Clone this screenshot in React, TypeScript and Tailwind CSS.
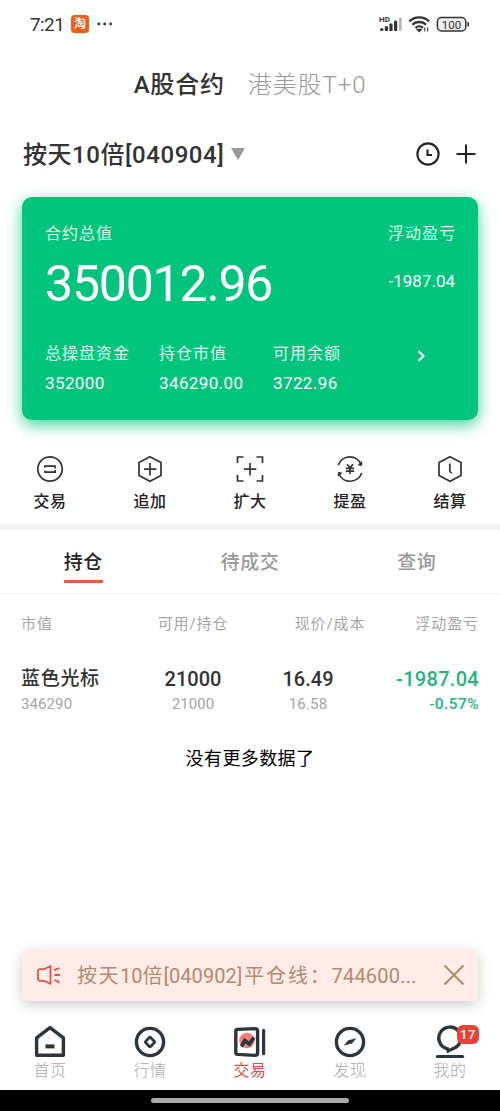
import React from "react";

type IconProps = { children: React.ReactNode };

function ActionIcon({ children }: IconProps) {
  return (
    <svg width="28" height="28" viewBox="0 0 28 28" fill="none" stroke="#333" strokeWidth="1.7">
      {children}
    </svg>
  );
}

function NavIcon({ children }: IconProps) {
  return (
    <svg width="36" height="36" viewBox="0 0 36 36" fill="none" stroke="#2b363d" strokeWidth="3.4">
      {children}
    </svg>
  );
}

const actions = [
  {
    label: "交易",
    icon: (
      <ActionIcon>
        <circle cx="14" cy="14" r="12.2" />
        <path d="M8.8 12.4V11.2H19v2.2M19.2 15v2.1H9v-1.6" />
      </ActionIcon>
    ),
  },
  {
    label: "追加",
    icon: (
      <ActionIcon>
        <path d="M14 1.8l11 5.8v12.8l-11 5.8-11-5.8V7.6z" />
        <path d="M14 8v12.4M8 14.2h12.4" />
      </ActionIcon>
    ),
  },
  {
    label: "扩大",
    icon: (
      <ActionIcon>
        <path d="M1.5 8V2h6M20.5 2h6v6M26.5 20v6h-6M7.5 26h-6v-6" />
        <path d="M14 8v12.4M8 14.2h12.4" />
      </ActionIcon>
    ),
  },
  {
    label: "提盈",
    icon: (
      <ActionIcon>
        <path d="M2.3 10A12.2 12.2 0 0 1 25.2 9.600M25.700 18A12.2 12.2 0 0 1 2.800 18.500" />
        <path d="M22.400 9.800l3.200.6.2-3.600zM5.600 18l-3.200-.6-.2 3.600z" fill="#333" strokeWidth="1" />
        <path d="M11 9.200l3 3.600 3-3.600M9.800 13.400h8.400M9.800 16.200h8.400M14 12.800v6.200" />
      </ActionIcon>
    ),
  },
  {
    label: "结算",
    icon: (
      <ActionIcon>
        <path d="M14 1.8l11 5.8v12.8l-11 5.8-11-5.8V7.6z" />
        <path d="M13.8 8.4v6.8c0 1.2.7 2.4 1.9 3" />
      </ActionIcon>
    ),
  },
];

const navs = [
  {
    label: "首页",
    icon: (
      <NavIcon>
        <path d="M4.600 13.800L18 3.600l13.400 10.200v17.400H4.600z" strokeLinejoin="round" />
        <path d="M13.500 22.400h9" strokeWidth="4" />
      </NavIcon>
    ),
  },
  {
    label: "行情",
    icon: (
      <NavIcon>
        <circle cx="18" cy="18" r="13.6" />
        <rect x="14.4" y="14.4" width="7.2" height="7.2" rx="1.2" transform="rotate(45 18 18)" strokeWidth="2.8" />
      </NavIcon>
    ),
  },
  {
    label: "交易",
    active: true,
    icon: (
      <NavIcon>
        <path d="M5.500 5.400L23 4.600q2.600 0 2.600 2.400v22q0 2.400-2.600 2.400L5.500 30.400q-1.700-.2-1.700-1.800V7.200q0-1.600 1.700-1.800z" strokeWidth="3.4" />
        <circle cx="15" cy="16.500" r="7.800" fill="#f77f7b" stroke="none" />
        <path d="M9.400 22.500l3.400-6 4.600 3.600 4.400-6.600" strokeWidth="3.6" />
        <path d="M31.600 6.300v23.400" strokeWidth="3.2" strokeLinecap="round" />
      </NavIcon>
    ),
  },
  {
    label: "发现",
    icon: (
      <NavIcon>
        <circle cx="18" cy="18" r="13.6" />
        <path d="M11.800 21.600l4.400-5.400 8.200-2-4.400 5.400z" fill="#2b363d" stroke="none" />
      </NavIcon>
    ),
  },
  {
    label: "我的",
    badge: "17",
    icon: (
      <NavIcon>
        <path d="M15.400 24.800A11 11 0 1 1 21 24.600l-4.800 2.400z" />
        <path d="M5.300 32.600h25.400" strokeWidth="3" strokeLinecap="round" />
      </NavIcon>
    ),
  },
];

function StatusBar() {
  return (
    <div className="flex h-12 items-center pl-[30px] pr-[30px] text-[#333]">
      <span className="w-[41px] text-[19px] leading-none tracking-[-0.6px]">7:21</span>
      <span className="flex h-[18px] w-[18px] items-center justify-center rounded-[4px] bg-[#f25c13] text-[12px] font-bold leading-none text-white">
        淘
      </span>
      <svg className="ml-2" width="16" height="4" viewBox="0 0 16 4" fill="#333">
        <circle cx="1.8" cy="2" r="1.4" />
        <circle cx="7.7" cy="2" r="1.4" />
        <circle cx="13.6" cy="2" r="1.4" />
      </svg>
      <svg className="ml-auto" width="91" height="20" viewBox="0 0 91 20" fill="#333">
        <text x="0" y="8" fontSize="8" fontWeight="700" textLength="11">HD</text>
        <rect x="1.2" y="14.2" width="3.2" height="2.8" rx="0.8" />
        <rect x="5.8" y="12.2" width="3.2" height="4.8" rx="0.8" />
        <rect x="10.4" y="9.6" width="3.2" height="7.4" rx="0.8" />
        <rect x="15" y="6.8" width="3.2" height="10.2" rx="0.8" />
        <rect x="19.8" y="3.6" width="3" height="13.4" rx="0.8" fill="#bbb" />
        <g fill="none" stroke="#333" strokeWidth="2.3">
          <path d="M30.3 7.400a14 14 0 0 1 19.800 0" />
          <path d="M33.400 10.800a9.600 9.600 0 0 1 13.600 0" />
          <path d="M36.500 13.800a5.400 5.400 0 0 1 7.400 0" />
        </g>
        <path d="M38 15.400h4.400l-2.200 2.400zM45.800 13.600v4M48.600 17.600v-4" stroke="#333" strokeWidth="1.1" />
        <rect x="58.4" y="3.600" width="28.400" height="13.400" rx="4" fill="#eee" stroke="#333" strokeWidth="1.5" />
        <rect x="88.400" y="8" width="1.600" height="4.600" rx="0.8" />
        <text x="62.800" y="14.500" fontSize="11.500" textLength="19.500">100</text>
      </svg>
    </div>
  );
}

function Stat({ label, value }: { label: string; value: string }) {
  return (
    <div className="w-[114px] shrink-0 whitespace-nowrap">
      <div className="text-[16px] leading-5 tracking-[1px] text-white/85">{label}</div>
      <div className="mt-[9px] text-[17px] leading-5 tracking-[0.4px]">{value}</div>
    </div>
  );
}

function SummaryCard() {
  return (
    <div className="mx-[22px] mt-[9px] h-[223px] rounded-[10px] bg-[#02c47c] px-[23px] pt-[27px] text-white shadow-[0_5px_16px_rgba(2,196,124,0.75)]">
      <div className="flex justify-between text-[16px] leading-5 tracking-[1px] text-white/85">
        <span>合约总值</span>
        <span className="-mr-px">浮动盈亏</span>
      </div>
      <div className="mt-[9px] flex h-[58px] justify-between">
        <span className="text-[50px] leading-[62px] tracking-[-1.2px]">350012.96</span>
        <span className="pt-[18px] text-[17px] leading-5">-1987.04</span>
      </div>
      <div className="mt-[33px] flex">
        <Stat label="总操盘资金" value="352000" />
        <Stat label="持仓市值" value="346290.00" />
        <Stat label="可用余额" value="3722.96" />
        <svg className="ml-7 mt-1" width="12" height="16" viewBox="0 0 12 16" fill="none" stroke="white" strokeWidth="2">
          <path d="M3.5 3l5 5-5 5" />
        </svg>
      </div>
    </div>
  );
}

function Holdings() {
  return (
    <div className="px-[21px]">
      <div className="mt-5 flex h-5 whitespace-nowrap text-[15px] leading-5 tracking-[0.9px] text-[#a5a5a5]">
        <span className="w-[103px]">市值</span>
        <span className="w-[138px] text-center">可用/持仓</span>
        <span className="w-[136px] text-center">现价/成本</span>
        <span className="flex-1 text-right">浮动盈亏</span>
      </div>
      <div className="mt-[30px] flex whitespace-nowrap">
        <div className="w-[103px]">
          <div className="pt-px text-[19px] font-medium leading-7 tracking-[0.7px] text-[#333]">蓝色光标</div>
          <div className="text-[15px] leading-[23px] tracking-[0.1px] text-[#a5a5a5]">346290</div>
        </div>
        <div className="w-[138px] pt-px text-center">
          <div className="text-[20px] font-medium leading-7 text-[#333]">21000</div>
          <div className="text-[15px] leading-[23px] text-[#a5a5a5]">21000</div>
        </div>
        <div className="w-[92px] pt-px text-center">
          <div className="text-[20px] font-medium leading-7 text-[#333]">16.49</div>
          <div className="text-[15px] leading-[23px] tracking-[0.2px] text-[#a5a5a5]">16.58</div>
        </div>
        <div className="flex-1 pt-px text-right text-[#1fb57c]">
          <div className="text-[20px] font-medium leading-7 tracking-[0.3px]">-1987.04</div>
          <div className="text-[15.5px] font-medium leading-[23px] tracking-[0.4px]">-0.57%</div>
        </div>
      </div>
      <div className="mt-[29px] text-center text-[18px] leading-7 tracking-[0.4px] text-black">没有更多数据了</div>
    </div>
  );
}

function Notice() {
  return (
    <div className="mx-[22px] flex h-[52px] items-center whitespace-nowrap rounded-[5px] bg-[#ffece9] pl-[14px] text-[20px] text-[#b5896b] shadow-[0_4px_14px_rgba(0,0,0,0.2)]">
      <svg width="26" height="22" viewBox="0 0 26 22" fill="none" stroke="#e0524a" strokeWidth="1.8" strokeLinejoin="round">
        <path d="M8 5.2L14.5 2v18L8 16.8H4q-2 0-2-2V7.2q0-2 2-2z" />
        <path d="M18 6.2l5.500-2.200M18.500 11h5.500M18 15.800l5.500 2.600" />
      </svg>
      <div className="ml-[15px] flex pt-[2px] leading-6">
        <span className="tracking-[1.5px]">按天</span>
        <span>10</span>
        <span className="tracking-[1px]">倍</span>
        <span className="tracking-[0.1px]">[040902]</span>
        <span className="ml-[2px] tracking-[1.8px]">平仓线：</span>
        <span className="tracking-[0.2px]">744600...</span>
      </div>
      <svg className="ml-auto mr-3" width="24" height="24" viewBox="0 0 24 24" fill="none" stroke="#b5896b" strokeWidth="2">
        <path d="M2.5 2.5l19 19M21.5 2.5l-19 19" />
      </svg>
    </div>
  );
}

export default function App() {
  return (
    <div className="flex h-[1111px] w-[500px] flex-col overflow-hidden bg-white font-['Roboto','Noto_Sans_CJK_SC',sans-serif]">
      <StatusBar />
      <div className="flex h-[72px] items-center justify-center gap-[23px] pt-[2px] text-[24px] leading-none">
        <span className="font-medium tracking-[0.8px] text-[#333]">A股合约</span>
        <span className="tracking-[0.9px] text-[#999]">
          <span className="font-light">港美股</span>
          <span className="font-light">T+0</span>
        </span>
      </div>
      <div className="flex h-[68px] items-center pl-[23px] pr-[23px] text-[#333]">
        <span className="pt-[2px] text-[24px] font-medium leading-none tracking-[0.55px]">按天10倍[040904]</span>
        <svg className="ml-[7px]" width="14" height="12" viewBox="0 0 14 12" fill="#999">
          <path d="M0 0h14L7 12z" />
        </svg>
        <svg className="ml-auto" width="24" height="24" viewBox="0 0 24 24" fill="none" stroke="#222" strokeWidth="2.1">
          <circle cx="12" cy="12" r="10.6" />
          <path d="M11.500 7.500v5.500h4.500" />
        </svg>
        <svg className="ml-[15px]" width="22" height="22" viewBox="0 0 22 22" stroke="#222" strokeWidth="2">
          <path d="M11 1.500v19M1.500 11h19" />
        </svg>
      </div>
      <SummaryCard />
      <div className="flex h-[104px] pt-[35px]">
        {actions.map((a) => (
          <div key={a.label} className="flex w-[100px] flex-col items-center">
            {a.icon}
            <span className="mt-[9px] text-[16px] font-medium leading-5 tracking-[0.5px] text-[#222]">{a.label}</span>
          </div>
        ))}
      </div>
      <div className="h-[6px] shrink-0 bg-[#f3f3f3]" />
      <div className="grid h-16 shrink-0 grid-cols-3 border-b border-[#eee] text-[19px] font-medium leading-[65px] tracking-[0.5px] text-[#999]">
        <div className="flex justify-center">
          <span className="h-[53px] border-b-[3px] border-[#e9594a] text-[#222]">持仓</span>
        </div>
        <div className="text-center">待成交</div>
        <div className="text-center">查询</div>
      </div>
      <Holdings />
      <div className="mt-auto">
        <Notice />
        <div className="mt-[23px] flex h-[66px]">
          {navs.map((n) => (
            <div key={n.label} className="relative flex w-[100px] flex-col items-center">
              {n.icon}
              <span
                className={
                  n.active
                    ? "text-[16px] leading-[22px] tracking-[0.5px] text-[#dd4f45]"
                    : "text-[16px] font-light leading-[22px] tracking-[0.5px] text-[#aaa]"
                }
              >
                {n.label}
              </span>
              {n.badge && (
                <span className="absolute left-[57px] top-px flex h-[19px] w-[22px] items-center justify-center rounded-[6px] bg-[#ea4335] text-[13px] font-medium leading-none tracking-[0.5px] text-white">
                  {n.badge}
                </span>
              )}
            </div>
          ))}
        </div>
        <div className="flex h-[21px] justify-center bg-black pt-2">
          <div className="h-[5px] w-[198px] rounded-full bg-[#aaa]" />
        </div>
      </div>
    </div>
  );
}
